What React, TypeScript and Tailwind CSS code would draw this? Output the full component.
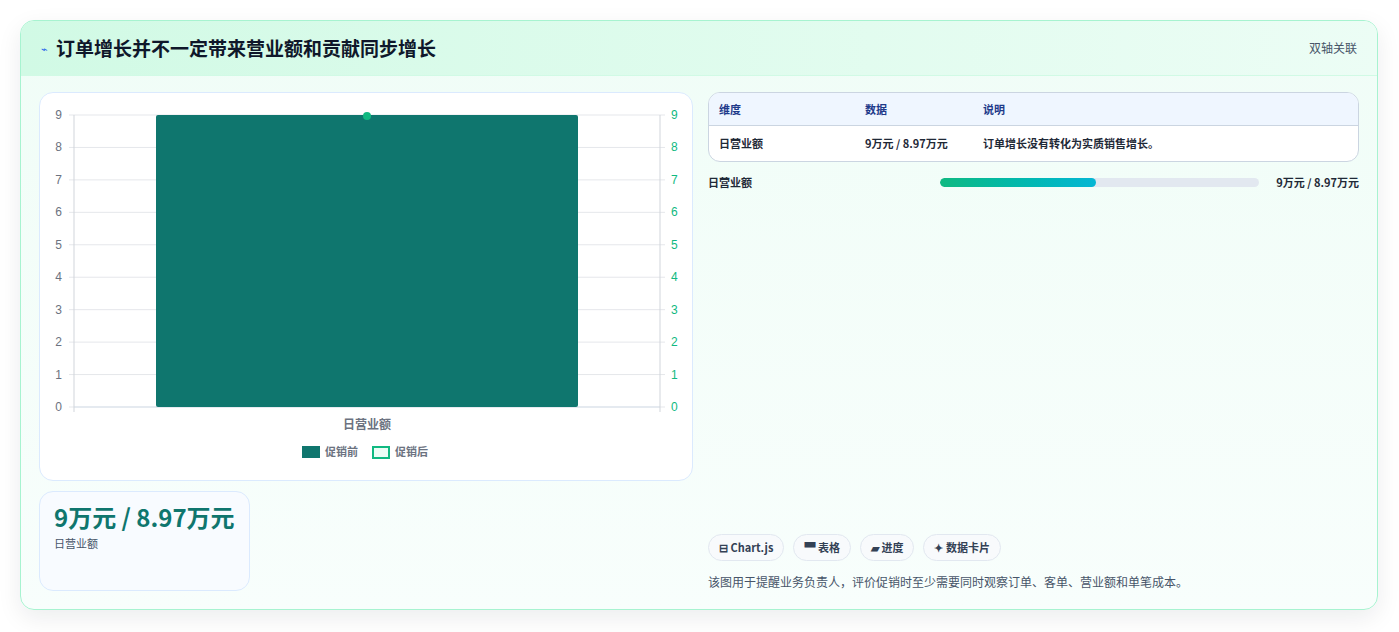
import React from "react";

const F = { fontFamily: '"Noto Sans CJK SC", "Noto Sans", sans-serif' };

function Chart() {
  const L = 73, R = 659, T = 115, B = 407;
  const ys = [0,1,2,3,4,5,6,7,8,9];
  const y = (v: number) => B - (v / 9) * (B - T);
  return (
    <svg width="652" height="388" viewBox="0 0 652 388" className="block">
      <g transform="translate(-39,-93)">
        {ys.map(v => (
          <g key={v}>
            <line x1={L} x2={R} y1={y(v)} y2={y(v)} stroke={v === 0 ? "#cbd5e1" : "#e5e7eb"} strokeWidth="1" />
            <line x1={L - 5} x2={L} y1={y(v)} y2={y(v)} stroke="#e5e7eb" />
            <line x1={R} x2={R + 5} y1={y(v)} y2={y(v)} stroke="#e5e7eb" />
            <text x={L - 12} y={y(v) + 4} fontSize="12" fill="#6b7280" textAnchor="end" fontFamily="Liberation Sans, sans-serif">{v}</text>
            <text x={R + 11} y={y(v) + 4} fontSize="12" fill="#10b981" fontFamily="Liberation Sans, sans-serif">{v}</text>
          </g>
        ))}
        <line x1={L} x2={L} y1={T} y2={B + 5} stroke="#d1d5db" />
        <line x1={R} x2={R} y1={T} y2={B + 5} stroke="#d1d5db" />
        <rect x="155" y={y(9)} width="422" height={B - y(9)} rx="2" fill="#0f766e" />
        <circle cx="366" cy={y(8.97)} r="4" fill="#10b981" />
        <text x="366" y="429" fontSize="12" fill="#6b7280" textAnchor="middle" fontWeight="600" style={F}>日营业额</text>
        <rect x="301" y="446" width="18" height="12" fill="#0f766e" />
        <text x="324" y="456" fontSize="11" fill="#6b7280" fontWeight="600" style={F}>促销前</text>
        <rect x="372" y="447" width="16" height="11" fill="#ecfdf5" stroke="#10b981" strokeWidth="2" />
        <text x="394" y="456" fontSize="11" fill="#6b7280" fontWeight="600" style={F}>促销后</text>
      </g>
    </svg>
  );
}

export default function App() {
  return (
    <div className="w-[1399px] h-[632px] bg-white pt-[20px] px-[20px]" style={F}>
      <div className="w-[1358px] h-[590px] rounded-[14px] border border-[#a7f3d0] bg-gradient-to-b from-[#f0fdf7] to-[#f8fefc] shadow-[0_8px_24px_rgba(15,23,42,0.08)] overflow-hidden flex flex-col">
        <div className="h-[56px] flex items-center justify-between px-[20px] bg-gradient-to-r from-[#d1fae5] to-[#ecfdf5] border-b border-[#d1fae5]">
          <div className="flex items-center gap-[8px]">
            <span className="text-[11px] text-[#2563eb]">⌁</span>
            <span className="text-[19px] font-bold text-[#0f172a]">订单增长并不一定带来营业额和贡献同步增长</span>
          </div>
          <span className="text-[12px] text-[#475569]">双轴关联</span>
        </div>
        <div className="flex-1 flex gap-[15px] px-[18px] pt-[16px] pb-[18px]">
          <div className="w-[654px] flex flex-col gap-[10px]">
            <div className="h-[389px] rounded-[14px] border border-[#dbeafe] bg-white overflow-hidden">
              <Chart />
            </div>
            <div className="w-[211px] h-[100px] rounded-[14px] border border-[#dbeafe] bg-[#f8fbff] px-[14px] pt-[12px]">
              <div className="text-[24px] leading-[26px] font-bold text-[#0f766e]">9万元 / 8.97万元</div>
              <div className="text-[11px] text-[#475569] mt-[5px]">日营业额</div>
            </div>
          </div>
          <div className="flex-1 flex flex-col">
            <div className="rounded-[12px] border border-[#cbd5e1] overflow-hidden bg-white text-[11px] font-semibold">
              <div className="flex h-[33px] items-center bg-[#eff6ff] text-[#1e3a8a] border-b border-[#cbd5e1]">
                <div className="w-[156px] pl-[10px]">维度</div>
                <div className="w-[118px]">数据</div>
                <div>说明</div>
              </div>
              <div className="flex h-[35px] items-center text-[#1f2937]">
                <div className="w-[156px] pl-[10px]">日营业额</div>
                <div className="w-[118px]">9万元 / 8.97万元</div>
                <div>订单增长没有转化为实质销售增长。</div>
              </div>
            </div>
            <div className="flex items-center mt-[12px] text-[11px] font-semibold text-[#1f2937]">
              <div className="w-[232px]">日营业额</div>
              <div className="w-[319px] h-[9px] rounded-full bg-[#e2e8f0] overflow-hidden">
                <div className="h-full rounded-full bg-gradient-to-r from-[#10b981] to-[#06b6d4]" style={{ width: "49%" }} />
              </div>
              <div className="ml-auto">9万元 / 8.97万元</div>
            </div>
            <div className="mt-auto flex gap-[9px] text-[11px] font-semibold text-[#334155]">
              {["⊟ Chart.js", "▀ 表格", "▰ 进度", "✦ 数据卡片"].map(t => (
                <span key={t} className="h-[27px] px-[10px] rounded-full border border-[#e2e8f0] bg-[#f8fafc] flex items-center">{t}</span>
              ))}
            </div>
            <div className="mt-[12px] text-[12px] text-[#475569]">该图用于提醒业务负责人，评价促销时至少需要同时观察订单、客单、营业额和单笔成本。</div>
          </div>
        </div>
      </div>
    </div>
  );
}
